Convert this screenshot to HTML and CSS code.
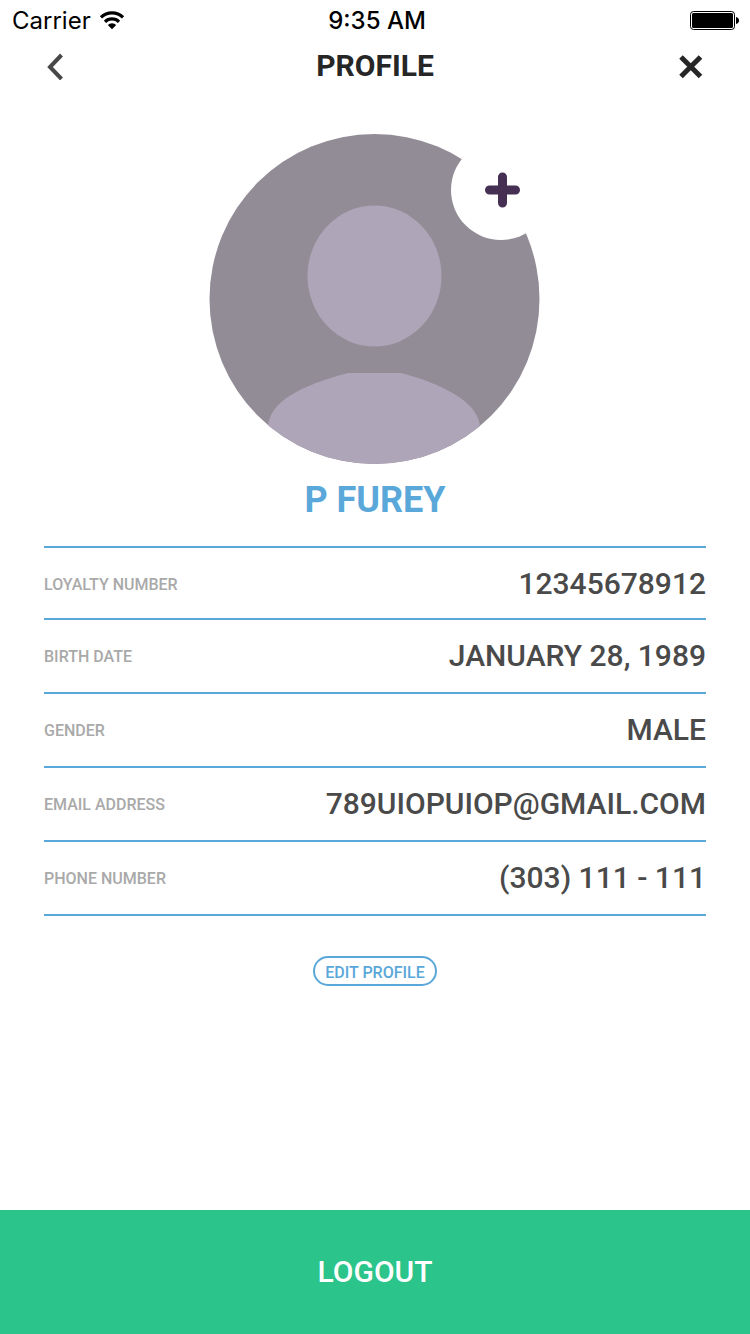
FILE: index.html
```html
<!DOCTYPE html>
<html lang="en">
<head>
<meta charset="utf-8">
<meta name="viewport" content="width=device-width, initial-scale=1">
<title>Profile</title>
<link rel="stylesheet" href="styles.css">
</head>
<body>
<div class="screen">
  <div class="status-bar">
    <div class="status-left">
      <span>Carrier</span>
      <svg class="wifi" width="26" height="20" viewBox="0 0 26 20" fill="none" stroke="#000" stroke-width="3.2" aria-hidden="true">
        <path d="M2 7.4a15.6 15.6 0 0 1 22 0"/>
        <path d="M6 11.8a10 10 0 0 1 14 0"/>
        <path d="M8.8 15a6 6 0 0 1 8.4 0L13 19.2z" fill="#000" stroke="none"/>
      </svg>
    </div>
    <span class="clock">9:35 AM</span>
    <div class="status-right">
      <svg width="50" height="20" viewBox="0 0 50 20" aria-hidden="true">
        <rect x=".5" y="1.5" width="44" height="18" rx="3" fill="none" stroke="#000"/>
        <rect x="2" y="3" width="41" height="15" rx="1.5" fill="#000"/>
        <path d="M46 7c2 .5 3 1.600 3 3.500s-1 3-3 3.500z" fill="#000"/>
      </svg>
    </div>
  </div>

  <header class="header">
    <button class="icon-button" type="button" aria-label="Back">
      <svg width="24" height="28" viewBox="0 0 24 28" fill="none" stroke="#484848" stroke-width="4" aria-hidden="true">
        <path d="M16.500 3 5 15l11.500 12"/>
      </svg>
    </button>
    <h1 class="title">PROFILE</h1>
    <button class="icon-button icon-button-end" type="button" aria-label="Close">
      <svg width="28" height="28" viewBox="0 0 28 28" fill="none" stroke="#262626" stroke-width="5" aria-hidden="true">
        <path d="M4 5 23.500 24.500M23.500 5 4 24.500"/>
      </svg>
    </button>
  </header>

  <main class="profile">
    <div class="avatar">
      <svg width="332" height="332" viewBox="209 133 332 332" aria-hidden="true">
        <defs><clipPath id="disc"><circle cx="374.500" cy="299" r="165"/></clipPath></defs>
        <circle cx="374.500" cy="299" r="165" fill="#928c96"/>
        <ellipse cx="374.500" cy="276" rx="67" ry="70.500" fill="#afa5b8"/>
        <path clip-path="url(#disc)" d="M268 428C268 401 303 385 348 373H401C440 383 480 402 480 428V470H268z" fill="#afa5b8"/>
      </svg>
      <button class="add-photo" type="button" aria-label="Add photo">
        <svg width="40" height="36" viewBox="0 0 40 36" fill="none" stroke="#452f52" stroke-width="9" stroke-linecap="round" aria-hidden="true">
          <path d="M21.500 5v26M8.500 18h26"/>
        </svg>
      </button>
    </div>
    <h2 class="name">P FUREY</h2>

    <dl class="details">
      <div class="row"><dt>LOYALTY NUMBER</dt><dd>12345678912</dd></div>
      <div class="row"><dt>BIRTH DATE</dt><dd>JANUARY 28, 1989</dd></div>
      <div class="row"><dt>GENDER</dt><dd>MALE</dd></div>
      <div class="row"><dt>EMAIL ADDRESS</dt><dd>789UIOPUIOP@GMAIL.COM</dd></div>
      <div class="row"><dt>PHONE NUMBER</dt><dd>(303) 111 - 111</dd></div>
    </dl>

    <button class="edit" type="button">EDIT PROFILE</button>
  </main>

  <button class="logout" type="button">LOGOUT</button>
</div>
</body>
</html>
```

FILE: styles.css
```css
* {
  box-sizing: border-box;
}

body {
  margin: 0;
  background: #fff;
  font-family: Roboto, "Liberation Sans", sans-serif;
  font-weight: 500;
}

button {
  margin: 0;
  padding: 0;
  border: 0;
  background: none;
  font: inherit;
  cursor: pointer;
}

svg {
  display: block;
}

.screen {
  display: flex;
  flex-direction: column;
  min-height: 100vh;
}

.status-bar {
  display: grid;
  grid-template-columns: 1fr auto 1fr;
  align-items: center;
  height: 40px;
  padding: 0 10px 0 12px;
  color: #000;
  font-family: Inter, Roboto, sans-serif;
  font-size: 24px;
  font-weight: 400;
}

.status-left {
  display: flex;
  align-items: center;
  gap: 8px;
}

.clock {
  padding-left: 2px;
  font-weight: 500;
}

.status-right {
  display: flex;
  justify-content: flex-end;
}

.header {
  display: grid;
  grid-template-columns: 1fr auto 1fr;
  align-items: center;
  height: 52px;
  padding: 0 45px;
}

.icon-button {
  justify-self: start;
}

.icon-button-end {
  justify-self: end;
}

.title {
  margin: 0;
  color: #262626;
  font-size: 30px;
  font-weight: 700;
  line-height: 36px;
}

.profile {
  display: flex;
  flex: 1;
  flex-direction: column;
  align-items: center;
  padding: 41px 44px 40px;
}

.avatar {
  position: relative;
}

.add-photo {
  position: absolute;
  top: 7px;
  right: -10px;
  display: flex;
  align-items: center;
  justify-content: center;
  width: 100px;
  height: 100px;
  border-radius: 50%;
  background: #fff;
}

.name {
  margin: 14px 0 25px;
  color: #5aa8da;
  font-size: 36px;
  font-weight: 700;
  line-height: 42px;
}

.details {
  align-self: stretch;
  margin: 0 0 40px;
  border-top: 2px solid #5aa8da;
}

.row {
  display: flex;
  align-items: center;
  justify-content: space-between;
  gap: 16px;
  min-height: 74px;
  border-bottom: 2px solid #5aa8da;
}

.row:first-child {
  min-height: 72px;
  padding-top: 2px;
}

.row dt {
  color: #a9a9a9;
  font-size: 16px;
}

.row dd {
  margin: 0;
  color: #4a4a4a;
  font-size: 30px;
  line-height: 36px;
}

.edit {
  height: 30px;
  padding: 2px 10px 0;
  border: 2px solid #5aa8da;
  border-radius: 15px;
  color: #5aa8da;
  font-size: 16px;
}

.logout {
  min-height: 124px;
  padding-bottom: 2px;
  background: #2bc48a;
  color: #fff;
  font-size: 30px;
}
```
